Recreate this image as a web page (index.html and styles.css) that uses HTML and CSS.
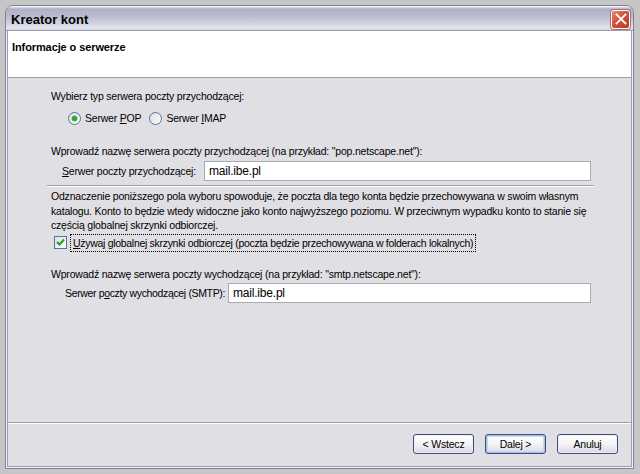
FILE: index.html
```html
<!DOCTYPE html>
<html lang="pl">
<head>
<meta charset="utf-8">
<title>Kreator kont</title>
<link rel="stylesheet" href="styles.css">
</head>
<body>
<div class="window">
  <div class="titlebar">
    <span class="title">Kreator kont</span>
    <span class="close" aria-label="Zamknij">
      <svg width="12" height="12" viewBox="0 0 12 12"><path d="M1.5 1.5 L10.5 10.5 M10.5 1.5 L1.5 10.5" stroke="#fff" stroke-width="1.8" stroke-linecap="square"/></svg>
    </span>
  </div>
  <div class="client">
    <div class="header">Informacje o serwerze</div>
    <div class="main">
      <p class="line first">Wybierz typ serwera poczty przychodzącej:</p>
      <div class="radios">
        <label class="radio"><span class="rbox checked"><span class="dot"></span></span><span>Serwer <u>P</u>OP</span></label>
        <label class="radio"><span class="rbox"></span><span>Serwer <u>I</u>MAP</span></label>
      </div>
      <p class="line q2">Wprowadź nazwę serwera poczty przychodzącej (na przykład: "pop.netscape.net"):</p>
      <div class="field in1">
        <span class="flabel"><u>S</u>erwer poczty przychodzącej:</span>
        <span class="input">mail.ibe.pl</span>
      </div>
      <div class="sep"></div>
      <p class="para">Odznaczenie poniższego pola wyboru spowoduje, że poczta dla tego konta będzie przechowywana w swoim własnym katalogu. Konto to będzie wtedy widoczne jako konto najwyższego poziomu. W przeciwnym wypadku konto to stanie się częścią globalnej skrzynki odbiorczej.</p>
      <div class="check">
        <span class="cbox"><svg width="9" height="9" viewBox="0 0 9 9"><path d="M1 4 L3.5 6.5 L8 1.5" fill="none" stroke="#21a121" stroke-width="2"/></svg></span>
        <span class="clabel"><u>U</u>żywaj globalnej skrzynki odbiorczej (poczta będzie przechowywana w folderach lokalnych)</span>
      </div>
      <p class="line q3">Wprowadź nazwę serwera poczty wychodzącej (na przykład: "smtp.netscape.net"):</p>
      <div class="field in2">
        <span class="flabel">Serwer p<u>o</u>czty wychodzącej (SMTP):</span>
        <span class="input">mail.ibe.pl</span>
      </div>
    </div>
    <div class="footer">
      <button class="btn">&lt; Wstecz</button>
      <button class="btn default">Dalej &gt;</button>
      <button class="btn">Anuluj</button>
    </div>
  </div>
</div>
</body>
</html>
```

FILE: styles.css
```css
html, body {
  margin: 0;
  padding: 0;
}
body {
  background: #c6c6c6;
  width: 640px;
  height: 474px;
  padding: 5px 6px 5px 5px;
  box-sizing: border-box;
  font-family: "Liberation Sans", "DejaVu Sans", sans-serif;
  font-size: 10.5px;
  letter-spacing: -0.2px;
  color: #000;
}
.window {
  width: 629px;
  height: 464px;
  box-sizing: border-box;
  border: 1px solid #80809c;
  border-radius: 8px 8px 0 0;
  background: #dcdce6;
  display: flex;
  flex-direction: column;
  overflow: hidden;
  box-shadow: inset 0 0 0 1px #f2f2f6;
}
.titlebar {
  height: 25px;
  flex: none;
  box-sizing: border-box;
  display: flex;
  align-items: center;
  justify-content: space-between;
  padding: 0 3px 0 5px;
  background: linear-gradient(#fbfbfd 0, #b0b0c8 12%, #babace 40%, #d4d4e2 75%, #e6e6ee 92%, #cfcfdc 100%);
  border-bottom: 1px solid #9d9db6;
}
.title {
  font-weight: bold;
  font-size: 13px;
  letter-spacing: 0;
  color: #000;
  padding-top: 2px;
}
.close {
  width: 19px;
  height: 19px;
  box-sizing: border-box;
  border: 1px solid #ffffff;
  border-radius: 3px;
  background: linear-gradient(135deg, #e98878 0%, #d2503c 45%, #b83a28 100%);
  display: flex;
  align-items: center;
  justify-content: center;
  box-shadow: 0 0 0 1px #b86a62;
  margin-top: 2px;
}
.client {
  flex: 1;
  margin: 0 1px 1px 1px;
  border-left: 1px solid #9d9db6;
  border-right: 1px solid #9d9db6;
  border-bottom: 1px solid #9d9db6;
  background: #e0dfe3;
  display: flex;
  flex-direction: column;
}
.header {
  height: 47px;
  flex: none;
  background: #fff;
  border-bottom: 1px solid #a0a0a4;
  box-sizing: border-box;
  font-weight: bold;
  font-size: 11px;
  letter-spacing: -0.1px;
  padding: 9px 0 0 4px;
  line-height: 14px;
}
.main {
  flex: 1;
  padding: 0 40px 0 43px;
  display: flex;
  flex-direction: column;
}
p {
  margin: 0;
}
.line {
  line-height: 14px;
}
.first {
  margin-top: 11px;
}
.radios {
  display: flex;
  gap: 8px;
  margin-top: 8px;
  padding-left: 17px;
  line-height: 14px;
}
.radio {
  display: flex;
  align-items: center;
  gap: 4px;
}
.rbox {
  width: 13px;
  height: 13px;
  box-sizing: border-box;
  border: 1px solid #4a76a8;
  border-radius: 50%;
  background: linear-gradient(135deg, #dcdce4, #ffffff);
  display: flex;
  align-items: center;
  justify-content: center;
}
.dot {
  width: 5px;
  height: 5px;
  border-radius: 50%;
  background: #30a830;
  box-shadow: 0 0 0 0.5px #6cc86c;
}
.q2 {
  margin-top: 19px;
}
.field {
  display: flex;
  align-items: center;
}
.flabel {
  line-height: 14px;
  white-space: nowrap;
  flex: none;
}
.input {
  flex: 1;
  height: 20px;
  box-sizing: border-box;
  border: 1px solid #a5acb5;
  background: #fff;
  font-size: 12px;
  letter-spacing: -0.2px;
  line-height: 18px;
  padding-left: 4px;
}
.in1 {
  margin-top: 3px;
  padding-left: 11px;
}
.in1 .flabel {
  width: 142px;
}
.sep {
  margin: 4px -3px 0 -4px;
  height: 0;
  border-top: 1px solid #a0a0a4;
  border-bottom: 1px solid #fff;
}
.para {
  margin-top: 2px;
  line-height: 14.5px;
  width: 541px;
}
.check {
  display: flex;
  align-items: center;
  margin-top: 1px;
  padding-left: 3px;
  gap: 3px;
}
.cbox {
  width: 13px;
  height: 13px;
  box-sizing: border-box;
  border: 1px solid #4a76a8;
  background: linear-gradient(135deg, #dcdce4, #ffffff);
  display: flex;
  align-items: center;
  justify-content: center;
}
.clabel {
  border: 1px dotted #000;
  padding: 1px 2px;
  line-height: 14px;
  letter-spacing: -0.3px;
}
.q3 {
  margin-top: 15px;
}
.in2 {
  margin-top: 2px;
  padding-left: 14px;
}
.in2 .flabel {
  width: 163px;
  letter-spacing: -0.35px;
}
.footer {
  height: 44px;
  flex: none;
  border-top: 1px solid #a0a0a4;
  box-shadow: inset 0 1px 0 #fff;
  display: flex;
  justify-content: flex-end;
  align-items: flex-start;
  gap: 11px;
  padding: 11px 13px 0 0;
  box-sizing: border-box;
}
.btn {
  width: 61px;
  height: 20px;
  font-family: "Liberation Sans", sans-serif;
  font-size: 10.5px;
  letter-spacing: -0.2px;
  color: #000;
  border: 1px solid #3c4d78;
  border-radius: 3px;
  background: linear-gradient(#ffffff 0%, #f4f4f6 50%, #dedee6 90%, #c8c8d4 100%);
  padding: 0;
  box-shadow: inset 0 0 0 1px #f0f0f4;
}
.btn.default {
  box-shadow: inset 0 0 0 1px #a8c0e8, inset 0 0 0 2px #c8d8f4;
}
```
